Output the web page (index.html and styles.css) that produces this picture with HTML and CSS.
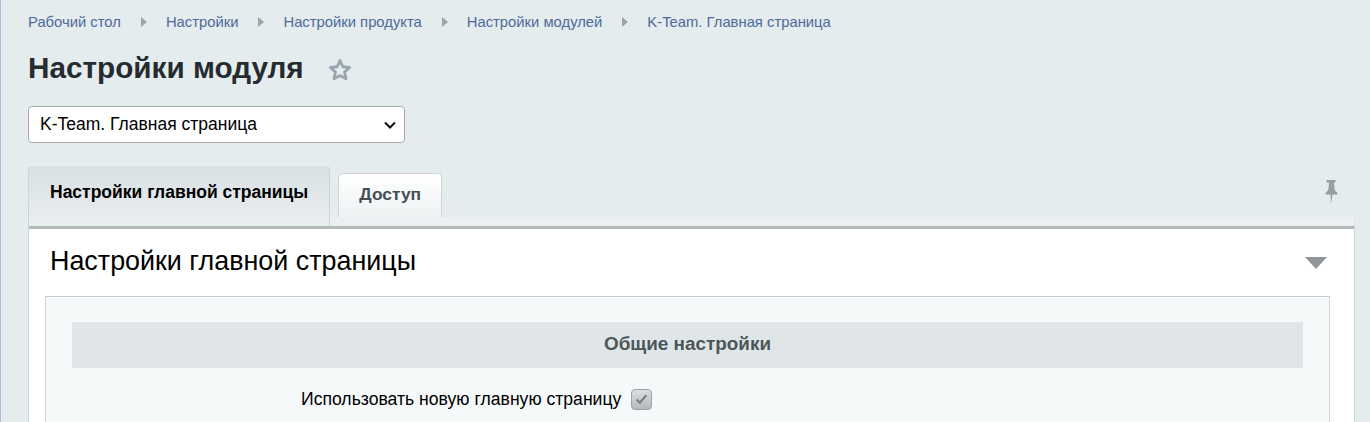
FILE: index.html
```html
<!DOCTYPE html>
<html lang="ru">

<head>
    <meta charset="UTF-8">
    <meta name="viewport" content="width=device-width, initial-scale=1.0">
    <title>Настройки модуля</title>
    <link rel="stylesheet" href="styles.css">
</head>

<body>
    <div class="crumbs">
        <a href="#">Рабочий стол</a>
        <span class="crumb-arrow"></span>
        <a href="#">Настройки</a>
        <span class="crumb-arrow"></span>
        <a href="#">Настройки продукта</a>
        <span class="crumb-arrow"></span>
        <a href="#">Настройки модулей</a>
        <span class="crumb-arrow"></span>
        <a href="#">K-Team. Главная страница</a>
    </div>

    <div class="title-row">
        <h1 class="page-title">Настройки модуля</h1>
        <svg class="star" width="26" height="26" viewBox="0 0 24 24">
            <path d="M12 3.2l2.6 5.8 6.3.7-4.7 4.2 1.3 6.2L12 17l-5.500 3.100 1.300-6.200-4.700-4.200 6.300-.7z" fill="none" stroke="#9aa6b0" stroke-width="2.600" stroke-linejoin="round" />
        </svg>
    </div>

    <div class="module-select">
        <span>K-Team. Главная страница</span>
        <svg width="12" height="8" viewBox="0 0 12 8">
            <path d="M1 1.500l5 5 5-5" fill="none" stroke="#111" stroke-width="2" />
        </svg>
    </div>

    <div class="tabs">
        <div class="tab tab-active">Настройки главной страницы</div>
        <div class="tab">Доступ</div>
        <svg class="pin" width="16" height="24" viewBox="0 0 16 24">
            <path d="M3.500 0h9v2.500h-1.500l.7 7.500 2.800 3v1.500h-5L8 24l-.5-9.500h-5V13l2.800-3L6 2.500H3.500z" fill="#96a0a3" />
        </svg>
    </div>

    <div class="panel">
        <div class="panel-head">
            <h2 class="panel-title">Настройки главной страницы</h2>
            <span class="collapse"></span>
        </div>
        <div class="inner">
            <div class="section-head">Общие настройки</div>
            <label class="option">
                <span class="option-name">Использовать новую главную страницу</span>
                <span class="check">
                    <svg width="15" height="13" viewBox="0 0 14 12">
                        <path d="M2.500 6l3 3 6-7" fill="none" stroke="#777d80" stroke-width="2" />
                    </svg>
                </span>
            </label>
        </div>
    </div>
</body>

</html>
```

FILE: styles.css
```css
html {
    height: 100%;
}

body {
    margin: 0;
    height: 422px;
    overflow: hidden;
    padding: 14px 15px 0 27px;
    box-sizing: border-box;
    border-left: 1px solid #a9bfd8;
    background-color: #e4ecee;
    font-family: "Liberation Sans", Arial, sans-serif;
    color: #000;
}

.crumbs {
    display: flex;
    align-items: center;
    height: 16px;
    font-size: 14.8px;
}

.crumbs a {
    color: #4e6a9a;
    text-decoration: none;
}

.crumb-arrow {
    width: 0;
    height: 0;
    margin: 0 19px 0 20px;
    border-left: 6px solid #9ba6a8;
    border-top: 5px solid transparent;
    border-bottom: 5px solid transparent;
}

.title-row {
    display: flex;
    align-items: center;
    margin-top: 20px;
    height: 36px;
}

.page-title {
    margin: 0;
    font-size: 29.7px;
    font-weight: bold;
    color: #262b30;
}

.star {
    margin-left: 23px;
    margin-top: 4px;
}

.module-select {
    display: flex;
    justify-content: space-between;
    align-items: center;
    box-sizing: border-box;
    width: 377px;
    height: 37px;
    margin-top: 20px;
    padding: 0 8px 0 11px;
    background-color: #fff;
    border: 1px solid #a5a9ab;
    border-radius: 4px;
    font-size: 17.5px;
}

.tabs {
    display: flex;
    align-items: flex-end;
    gap: 8px;
    height: 52px;
    margin-top: 22px;
    position: relative;
}

.tab {
    box-sizing: border-box;
    height: 44px;
    padding: 0 20px;
    line-height: 40px;
    font-size: 17.4px;
    font-weight: bold;
    color: #454d55;
    background: linear-gradient(#fff, #eef2f3);
    border: 1px solid #ccd5d8;
    border-bottom: none;
    border-radius: 5px 5px 0 0;
}

.tab-active {
    height: 61px;
    margin-bottom: -9px;
    padding: 0 21px;
    line-height: 52px;
    font-size: 17.5px;
    color: #000;
    background: linear-gradient(#d8e0e3, #e9eef0);
    border-top-color: #eef2f3;
    position: relative;
    z-index: 1;
}

.pin {
    position: absolute;
    right: 16px;
    top: 15px;
}

.panel {
    box-sizing: border-box;
    height: 205px;
    padding: 0 24px 0 16px;
    background-color: #fff;
    border-top: 9px solid #edf0f2;
    border-left: 1px solid #cdd6d8;
    border-right: 1px solid #cdd6d8;
    box-shadow: inset 0 3px 0 #b2baba;
}

.panel-head {
    display: flex;
    justify-content: space-between;
    align-items: center;
    height: 70px;
    padding: 0 3px 0 5px;
}

.panel-title {
    margin: 0;
    font-size: 26.9px;
    font-weight: normal;
}

.collapse {
    width: 0;
    height: 0;
    margin-top: 3px;
    border-top: 12px solid #8f9799;
    border-left: 11px solid transparent;
    border-right: 11px solid transparent;
}

.inner {
    box-sizing: border-box;
    height: 126px;
    padding: 25px 26px 0;
    background-color: #f5f9fa;
    border: 1px solid #cdd6d8;
    border-top-color: #c0cdd6;
    border-bottom: none;
}

.section-head {
    height: 46px;
    line-height: 44px;
    text-align: center;
    font-size: 18.9px;
    font-weight: bold;
    color: #4b5659;
    background-color: #e0e6e8;
}

.option {
    display: flex;
    align-items: center;
    gap: 10px;
    height: 22px;
    margin-top: 20px;
    padding-left: 229px;
    font-size: 17.6px;
}

.check {
    display: flex;
    align-items: center;
    justify-content: center;
    box-sizing: border-box;
    width: 21px;
    height: 21px;
    background: linear-gradient(#dcdfe1, #b4b8bb);
    border: 1px solid #9da3a6;
    border-radius: 4px;
}
```
